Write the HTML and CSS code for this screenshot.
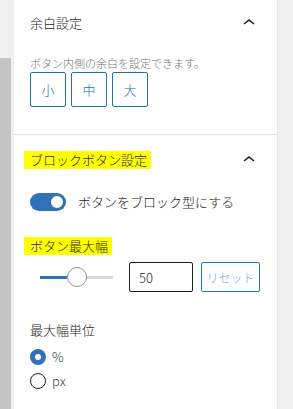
FILE: index.html
```html
<!DOCTYPE html>
<html lang="ja">
<head>
<meta charset="utf-8">
<link rel="stylesheet" href="styles.css">
</head>
<body>
<div class="layout">
  <div class="gutter"><div class="gutter-bar"></div></div>
  <div class="panel">
    <section class="section section-first">
      <div class="section-header">
        <span class="section-title">余白設定</span>
        <svg class="chevron" viewBox="0 0 24 24" width="24" height="24"><path d="M6.5 12.4L12 8l5.5 4.4-.9 1.2L12 10l-4.6 3.6-.9-1.2z"/></svg>
      </div>
      <p class="help">ボタン内側の余白を設定できます。</p>
      <div class="size-group">
        <button class="size-btn">小</button>
        <button class="size-btn">中</button>
        <button class="size-btn">大</button>
      </div>
    </section>
    <section class="section section-second">
      <div class="section-header header-second">
        <span class="section-title"><span class="marker">ブロックボタン設定</span></span>
        <svg class="chevron" viewBox="0 0 24 24" width="24" height="24"><path d="M6.5 12.4L12 8l5.5 4.4-.9 1.2L12 10l-4.6 3.6-.9-1.2z"/></svg>
      </div>
      <div class="toggle-row">
        <span class="toggle"><span class="toggle-knob"></span></span>
        <span class="toggle-label">ボタンをブロック型にする</span>
      </div>
      <div class="field-label"><span class="marker">ボタン最大幅</span></div>
      <div class="range-row">
        <div class="range">
          <span class="range-fill"></span>
          <span class="range-thumb"></span>
          <span class="range-rest"></span>
        </div>
        <input class="num-input" type="text" value="50">
        <button class="reset-btn">リセット</button>
      </div>
      <div class="unit-label">最大幅単位</div>
      <div class="radio-list">
        <label class="radio-row"><span class="radio radio-on"></span><span class="radio-text">%</span></label>
        <label class="radio-row"><span class="radio"></span><span class="radio-text">px</span></label>
      </div>
    </section>
  </div>
</div>
</body>
</html>
```

FILE: styles.css
```css
* { box-sizing: border-box; }
html, body {
  margin: 0;
  padding: 0;
}
body {
  background: #f0f0f0;
  font-family: "Noto Sans CJK JP", "Noto Sans", sans-serif;
  font-weight: 300;
  color: #1e1e1e;
  width: 293px;
  height: 409px;
  overflow: hidden;
}
.layout {
  display: flex;
  height: 409px;
}
.gutter {
  width: 14px;
  display: flex;
  flex-direction: column;
}
.gutter-bar {
  margin-top: 58px;
  width: 11px;
  flex: 1;
  background: #c4c4c4;
}
.panel {
  width: 264px;
  background: #fff;
  border-right: 1px solid #e6e6e6;
}
.section {
  padding: 0 16px;
}
.section-first {
  padding-bottom: 27px;
  border-bottom: 1px solid #e0e0e0;
}
.section-header {
  height: 46px;
  display: flex;
  align-items: center;
  justify-content: space-between;
}
.header-second {
  height: 50px;
}
.section-title {
  font-size: 13px;
  line-height: 18px;
}
.chevron {
  fill: #1e1e1e;
  display: block;
}
.marker {
  display: inline-block;
  background: #ffff00;
  margin-left: -6px;
  padding: 0 4px 0 6px;
  line-height: 18px;
}
.help {
  margin: 9px 0 0;
  font-size: 11px;
  line-height: 16px;
  color: #757575;
}
.size-group {
  margin-top: 1px;
  display: flex;
  gap: 5px;
}
.size-btn {
  width: 36px;
  height: 35px;
  padding: 0;
  border: 1px solid #2271b1;
  border-radius: 2px;
  background: #fff;
  color: #2271b1;
  font-family: inherit;
  font-weight: 300;
  font-size: 13px;
}
.toggle-row {
  margin-top: 8px;
  height: 18px;
  display: flex;
  align-items: center;
  gap: 12px;
}
.toggle {
  width: 36px;
  height: 18px;
  border-radius: 9px;
  background: #2f72b7;
  display: flex;
  align-items: center;
  justify-content: flex-end;
  padding-right: 3px;
}
.toggle-knob {
  width: 12px;
  height: 12px;
  border-radius: 50%;
  background: #fff;
}
.toggle-label {
  font-size: 13px;
  line-height: 18px;
}
.field-label {
  margin-top: 26px;
  font-size: 13px;
  line-height: 18px;
  height: 18px;
}
.range-row {
  margin-top: 7px;
  height: 30px;
  display: flex;
  align-items: center;
}
.range {
  margin-left: 10px;
  width: 73px;
  display: flex;
  align-items: center;
}
.range-fill {
  width: 27px;
  height: 3px;
  background: #2f72b7;
}
.range-thumb {
  width: 20px;
  height: 20px;
  border-radius: 50%;
  border: 1px solid #8c8f94;
  background: #fff;
}
.range-rest {
  flex: 1;
  height: 3px;
  background: #dcdcde;
}
.num-input {
  margin-left: 16px;
  width: 64px;
  height: 30px;
  border: 1px solid #1e1e1e;
  border-radius: 2px;
  padding: 0 0 0 9px;
  font-family: inherit;
  font-weight: 300;
  font-size: 13px;
  color: #1e1e1e;
  background: #fff;
}
.reset-btn {
  margin-left: 8px;
  width: 59px;
  height: 30px;
  padding: 0;
  border: 1px solid #2271b1;
  border-radius: 2px;
  background: #fff;
  color: #7ba6d4;
  font-family: inherit;
  font-weight: 300;
  font-size: 12px;
}
.unit-label {
  margin-top: 29px;
  font-size: 13px;
  line-height: 18px;
}
.radio-list {
  margin-top: 6px;
  display: flex;
  flex-direction: column;
}
.radio-row {
  height: 24px;
  display: flex;
  align-items: center;
  gap: 6px;
}
.radio {
  width: 16px;
  height: 16px;
  border-radius: 50%;
  border: 1px solid #1e1e1e;
  background: #fff;
}
.radio-on {
  border: 5px solid #2f72b7;
}
.radio-text {
  font-size: 13px;
  line-height: 18px;
  color: #3c3c3c;
}
```
